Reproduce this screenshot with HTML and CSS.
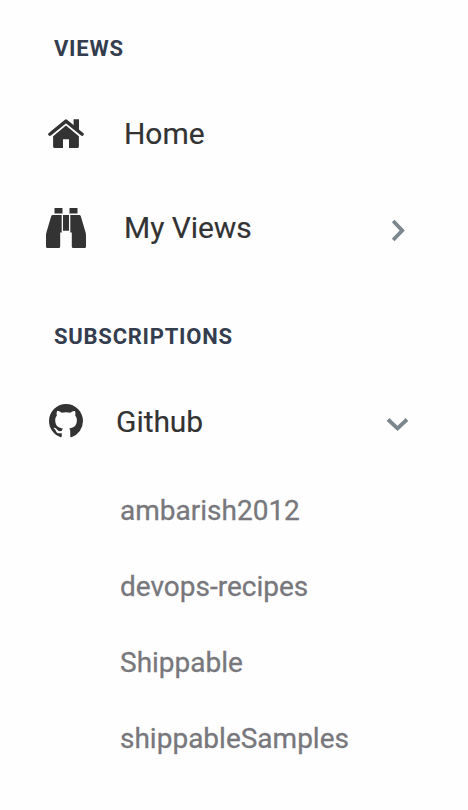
FILE: index.html
```html
<!DOCTYPE html>
<html lang="en">
<head>
<meta charset="utf-8">
<title>Navigation</title>
<link rel="stylesheet" href="styles.css">
</head>
<body>
<nav class="sidebar">
  <section class="group">
    <h2 class="heading">VIEWS</h2>
    <a class="item">
      <span class="icon"><svg width="36" height="30" viewBox="0 0 36 30"><path d="M18 6.600 30.900 17.300V27.400Q30.900 29 29.300 29H21V20.300H15V29H6.700Q5.100 29 5.100 27.400V17.300Z"/><path class="roof" d="M1.900 15.200 18 2.100 34.100 15.200"/><path d="M25.600 .3H31V12L25.600 8Z"/></svg></span>
      <span class="label">Home</span>
    </a>
    <a class="item">
      <span class="icon"><svg width="40" height="40" viewBox="0 0 40 40"><path d="M8.500 0H16.500V5.500H8.500ZM23.500 0H31.500V5.500H23.500ZM17 7H23V22.800H17ZM6.700 7H15.700V24.500H14.200V38.500Q14.200 40 12.700 40H1.500Q0 40 0 38.500V27.500Q0 26 .4 24.600L5.200 8.200Q5.600 7 6.700 7ZM24.300 7H33.300Q34.400 7 34.800 8.200L39.600 24.600Q40 26 40 27.500V38.500Q40 40 38.500 40H27.300Q25.800 40 25.800 38.500V24.500H24.300Z"/></svg></span>
      <span class="label">My Views</span>
      <span class="chevron"><svg width="24" height="24" viewBox="0 0 24 24"><path d="M7.200 2 16.200 11.500 7.200 21"/></svg></span>
    </a>
  </section>
  <section class="group">
    <h2 class="heading">SUBSCRIPTIONS</h2>
    <a class="item github">
      <span class="icon"><svg width="34" height="34" viewBox="0 0 16 16"><path d="M8 0C3.580 0 0 3.580 0 8c0 3.540 2.290 6.530 5.470 7.590.4.070.55-.17.55-.38 0-.19-.01-.82-.01-1.490-2.010.37-2.530-.49-2.690-.94-.09-.23-.48-.94-.82-1.130-.28-.15-.68-.52-.01-.53.63-.01 1.080.58 1.230.82.72 1.210 1.870.87 2.330.66.070-.52.28-.87.51-1.070-1.780-.2-3.640-.89-3.640-3.950 0-.87.31-1.590.82-2.150-.08-.2-.36-1.020.08-2.120 0 0 .67-.21 2.200.82.64-.18 1.320-.27 2-.27s1.360.09 2 .27c1.530-1.040 2.200-.82 2.200-.82.44 1.100.16 1.920.08 2.120.51.56.82 1.270.82 2.150 0 3.070-1.870 3.750-3.650 3.950.29.25.54.73.54 1.480 0 1.070-.01 1.930-.01 2.200 0 .21.15.46.55.38A8.010 8.010 0 0 0 16 8c0-4.420-3.580-8-8-8Z"/></svg></span>
      <span class="label">Github</span>
      <span class="chevron"><svg width="24" height="24" viewBox="0 0 24 24"><path d="M2 7.500 11.500 16.500 21 7.500"/></svg></span>
    </a>
    <ul class="children">
      <li>ambarish2012</li>
      <li>devops-recipes</li>
      <li>Shippable</li>
      <li>shippableSamples</li>
    </ul>
  </section>
</nav>
</body>
</html>
```
FILE: styles.css
```css
* { box-sizing: border-box; }
body {
  margin: 0;
  background: #fefefe;
  color: #333;
  font-family: Roboto, "Liberation Sans", sans-serif;
}
.sidebar { padding: 1px 58px 0 44px; }
.group + .group { margin-top: 14px; }
.heading {
  margin: 0 0 0 10px;
  height: 86px;
  padding-top: 35px;
  font-size: 22px;
  line-height: 26px;
  font-weight: 700;
  letter-spacing: 0.75px;
  color: #343d4e;
}
.item {
  display: flex;
  align-items: center;
  height: 94px;
  font-size: 30px;
  line-height: 36px;
}
.label {
  letter-spacing: -0.05px;
  -webkit-text-stroke: 0.15px currentColor;
}
.icon {
  display: flex;
  justify-content: center;
  width: 44px;
  margin-right: 36px;
}
.icon svg { display: block; fill: #333; }
.icon .roof {
  fill: none;
  stroke: #333;
  stroke-width: 3.4;
  stroke-linecap: round;
  stroke-linejoin: round;
}
.chevron { margin-left: auto; padding-top: 6px; }
.chevron svg { display: block; fill: none; stroke: #7c868d; stroke-width: 3.8; }
.github .icon { margin-right: 28px; padding-bottom: 2px; }
.github .chevron { padding-top: 4px; }
.children {
  margin: 0;
  padding: 4px 0 0 76px;
  list-style: none;
  font-size: 28px;
  line-height: 76px;
  color: #77777c;
  -webkit-text-stroke: 0.3px currentColor;
}
```
